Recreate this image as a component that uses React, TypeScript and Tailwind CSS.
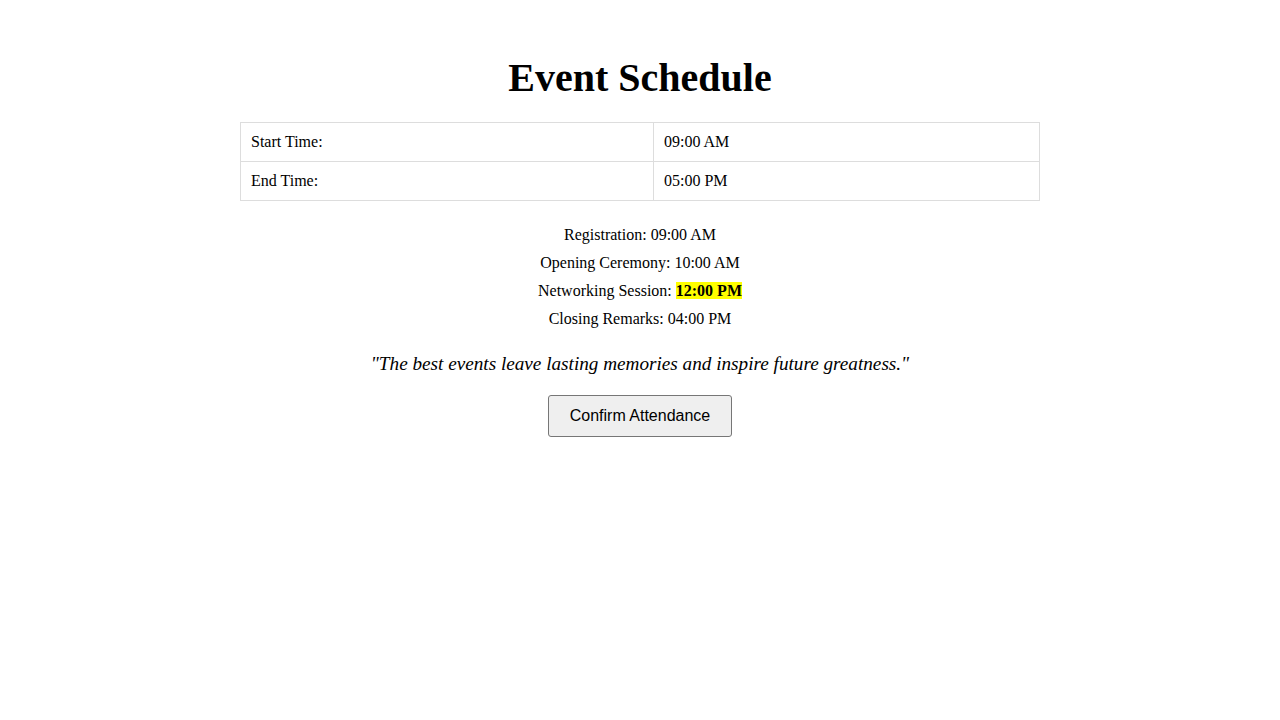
export default function App() {
  const items = [
    { label: 'Registration', time: '09:00 AM' },
    { label: 'Opening Ceremony', time: '10:00 AM' },
    { label: 'Networking Session', time: '12:00 PM', highlight: true },
    { label: 'Closing Remarks', time: '04:00 PM' },
  ];

  return (
    <div className="min-h-screen bg-white text-black font-['Liberation_Serif',serif] text-base">
      {/* Title */}
      <h1 className="pt-[55px] text-center text-[40px] font-bold leading-[46px]">Event Schedule</h1>

      {/* Times table */}
      <table className="mx-auto mt-[21px] w-[800px] border-collapse">
        <tbody>
          <tr>
            <td className="w-[413px] border border-[#dddddd] px-[10px] py-[10px] leading-[18px]">Start Time:</td>
            <td className="border border-[#dddddd] px-[10px] py-[10px] leading-[18px]">09:00 AM</td>
          </tr>
          <tr>
            <td className="w-[413px] border border-[#dddddd] px-[10px] py-[10px] leading-[18px]">End Time:</td>
            <td className="border border-[#dddddd] px-[10px] py-[10px] leading-[18px]">05:00 PM</td>
          </tr>
        </tbody>
      </table>

      {/* Agenda */}
      <div className="mt-[20px] flex flex-col items-center">
        {items.map((item) => (
          <p key={item.label} className="leading-[28px]">
            {item.label}:{' '}
            {item.highlight ? (
              <span className="bg-[#ffff00] font-bold">{item.time}</span>
            ) : (
              item.time
            )}
          </p>
        ))}
      </div>

      {/* Quote */}
      <p className="mt-[20px] text-center text-[19.2px] italic leading-[22px]">
        "The best events leave lasting memories and inspire future greatness."
      </p>

      <div className="mt-[20px] flex justify-center">
        <button
          type="button"
          className="h-[42px] rounded-[3px] border border-[#767676] bg-[#efefef] px-[21px] font-['Liberation_Sans',Arial,sans-serif] text-base text-black"
        >
          Confirm Attendance
        </button>
      </div>
    </div>
  );
}
